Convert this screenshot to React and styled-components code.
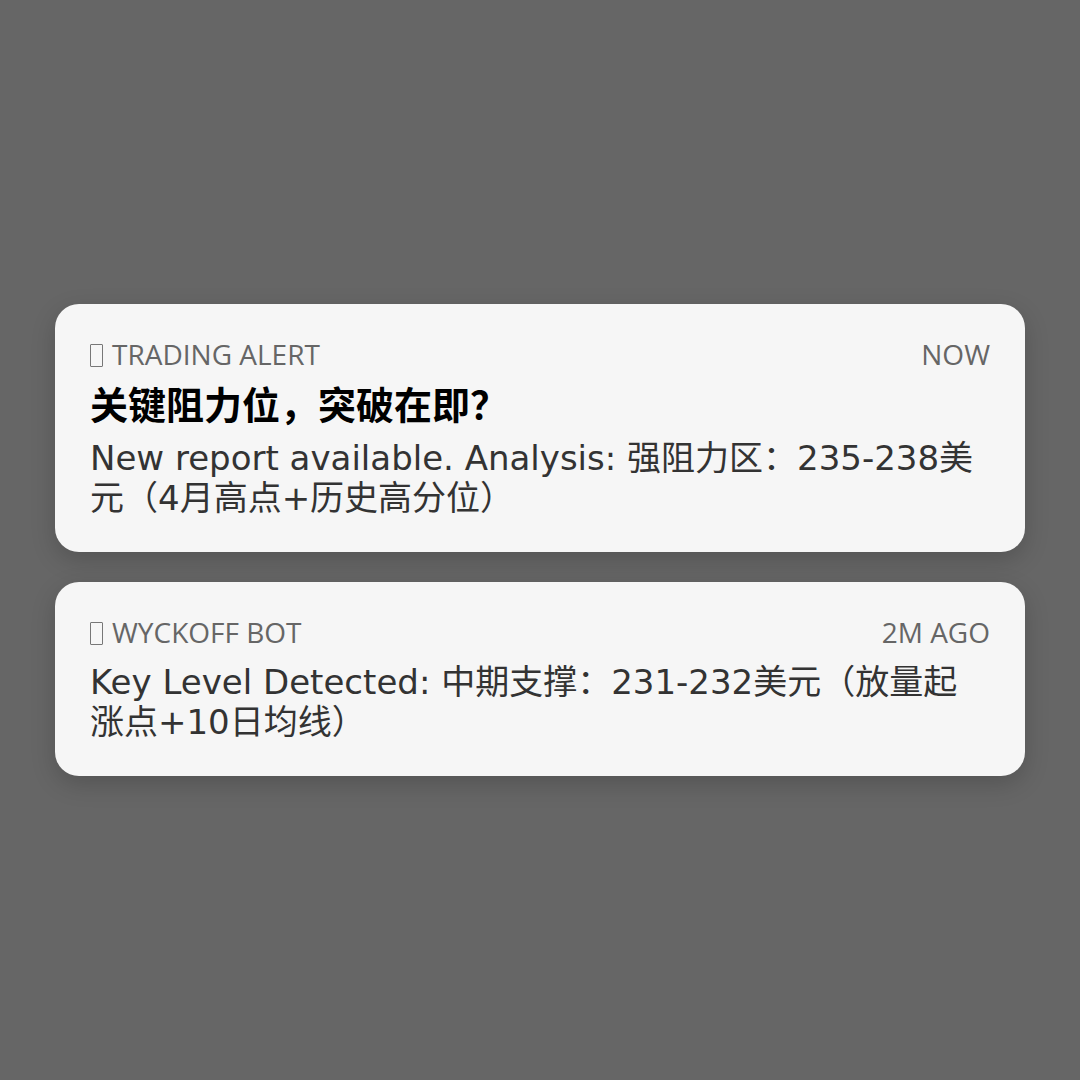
import React from "react";
import styled, { createGlobalStyle } from "styled-components";

const GlobalStyle = createGlobalStyle`
  html, body {
    margin: 0;
    padding: 0;
    background: #666666;
  }
  #root {
    min-height: 100vh;
  }
`;

const Stage = styled.div`
  width: 1080px;
  height: 1080px;
  display: flex;
  flex-direction: column;
  justify-content: center;
  gap: 30px;
  padding: 0 55px;
  box-sizing: border-box;
  background: #666666;
`;

const Card = styled.div`
  background: #f6f6f6;
  border-radius: 24px;
  padding: 32px 35px 34px;
  box-shadow: 0 8px 24px rgba(0, 0, 0, 0.18);
  display: flex;
  flex-direction: column;
`;

const Header = styled.div`
  display: flex;
  justify-content: space-between;
  align-items: center;
  font-family: "Open Sans", "Noto Sans", sans-serif;
  font-size: 28px;
  line-height: 36px;
  color: #666666;
  text-transform: uppercase;
`;

const Source = styled.span`
  display: flex;
  align-items: center;
  gap: 9px;
`;

// missing-glyph box, as the app's emoji shows up in the reference
const Glyph = styled.span`
  display: inline-block;
  width: 11px;
  height: 21px;
  border: 1.5px solid #777777;
  border-radius: 1px;
  margin-top: 3px;
`;

const Title = styled.div`
  margin-top: 10px;
  font-family: "DejaVu Sans", "Noto Sans CJK SC", sans-serif;
  font-weight: 700;
  font-size: 38px;
  line-height: 48px;
  color: #000000;
`;

const Body = styled.div`
  margin-top: ${(p) => (p.$afterTitle ? "8px" : "12px")};
  font-family: "DejaVu Sans", "Noto Sans CJK SC", sans-serif;
  font-size: 34px;
  line-height: 40px;
  color: #333333;
`;

const alerts = [
  {
    source: "Trading Alert",
    time: "Now",
    title: "关键阻力位，突破在即？",
    body: "New report available. Analysis: 强阻力区：235-238美元（4月高点+历史高分位）",
  },
  {
    source: "Wyckoff Bot",
    time: "2m ago",
    body: "Key Level Detected: 中期支撑：231-232美元（放量起涨点+10日均线）",
  },
];

export default function App() {
  return (
    <>
      <GlobalStyle />
      <Stage>
        {alerts.map((a) => (
          <Card key={a.source}>
            <Header>
              <Source>
                <Glyph />
                {a.source}
              </Source>
              <span>{a.time}</span>
            </Header>
            {a.title && <Title>{a.title}</Title>}
            <Body $afterTitle={!!a.title}>{a.body}</Body>
          </Card>
        ))}
      </Stage>
    </>
  );
}
